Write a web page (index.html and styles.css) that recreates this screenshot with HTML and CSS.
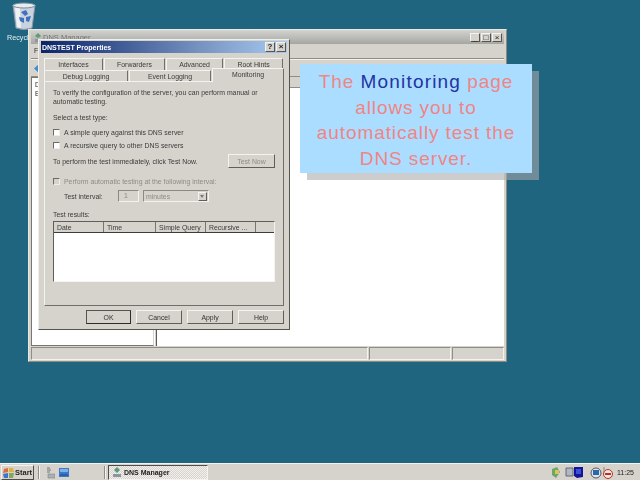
FILE: index.html
```html
<!DOCTYPE html>
<html lang="en">
<head>
<meta charset="utf-8">
<title>DNS Manager</title>
<link rel="stylesheet" href="styles.css">
</head>
<body>
<div class="desktop">
  <div class="desk-icon">
    <svg class="bin" width="24" height="29" viewBox="0 0 24 29"><path d="M1 3 L23 3 L20 26 Q12 29 4 26 Z" fill="#c9d3de" stroke="#8a98a8"/><path d="M3 5 L8 5 L9 26 L5 25 Z" fill="#eef2f5"/><ellipse cx="12" cy="3.500" rx="11" ry="2.500" fill="#e6ecf0" stroke="#7d8b99"/><path d="M9 10 l5 -2 l2 4 l-3 2 Z M7 15 l5 1 l0 5 l-4 -2 Z M14 15 l5 -1 l-2 6 l-3 -1 Z" fill="#4070c0"/></svg>
    <span class="desk-label">Recycle Bin</span>
  </div>

  <section class="window">
    <header class="win-title">
      <svg width="8" height="10" viewBox="0 0 8 10"><path d="M4 0 L7 3 L4 5 L1 3 Z" fill="#5c9c78"/><path d="M1 6 H7 V9 H1 Z" fill="#8b96a0"/></svg>
      <span class="win-name">DNS Manager</span>
      <span class="win-btns"><i class="cap">_</i><i class="cap">□</i><i class="cap">×</i></span>
    </header>
    <div class="menu"><span>File</span></div>
    <div class="toolbar"><svg width="9" height="9" viewBox="0 0 9 9"><path d="M0 4.500 L5 0 V3 H9 V6 H5 V9 Z" fill="#3d8ed0"/></svg></div>
    <div class="panes">
      <div class="tree"><span>D</span><span>E</span></div>
      <div class="split"></div>
      <div class="detail"><div class="detail-head"></div></div>
    </div>
    <footer class="status"><div class="st st-a"></div><div class="st st-b"></div><div class="st st-c"></div></footer>
  </section>

  <section class="dialog">
    <header class="dlg-title"><span>DNSTEST Properties</span><span class="dlg-btns"><i class="cap bold">?</i><i class="cap bold">×</i></span></header>
    <nav class="tabs">
      <div class="tab-row">
        <span class="tab w59">Interfaces</span><span class="tab w61">Forwarders</span><span class="tab w57">Advanced</span><span class="tab w59">Root Hints</span>
      </div>
      <div class="tab-row row2">
        <span class="tab w84">Debug Logging</span><span class="tab w82">Event Logging</span><span class="tab active">Monitoring</span>
      </div>
    </nav>
    <div class="page">
      <p class="para">To verify the configuration of the server, you can perform manual or<br>automatic testing.</p>
      <p class="line gap7">Select a test type:</p>
      <label class="check-row gap5"><i class="check"></i>A simple query against this DNS server</label>
      <label class="check-row gap3"><i class="check"></i>A recursive query to other DNS servers</label>
      <div class="now-row"><span>To perform the test immediately, click Test Now.</span><span class="btn now">Test Now</span></div>
      <label class="check-row off gap8"><i class="check dim"></i>Perform automatic testing at the following interval:</label>
      <div class="interval">
        <span class="int-label">Test interval:</span>
        <span class="field">1</span>
        <span class="select">minutes<i class="arrow"></i></span>
      </div>
      <p class="line gap8">Test results:</p>
      <div class="table">
        <div class="thead"><span class="c50">Date</span><span class="c52">Time</span><span class="c50">Simple Query</span><span class="c50">Recursive ...</span><span class="cfill"></span></div>
      </div>
    </div>
    <div class="actions"><span class="btn def">OK</span><span class="btn">Cancel</span><span class="btn">Apply</span><span class="btn">Help</span></div>
  </section>

  <aside class="callout">The <b class="key">Monitoring</b> page<br>allows you to<br>automatically test the<br>DNS server.</aside>

  <footer class="taskbar">
    <span class="start"><svg width="11" height="12" viewBox="0 0 11 12"><path d="M1 2 L5 1 V5 L0 6 Z" fill="#d9703a"/><path d="M6 1 L10 1 L11 5 H6 Z" fill="#e0b040"/><path d="M0 7 L5 6 V11 L1 11 Z" fill="#3f74c8"/><path d="M6 6 H11 L10 11 L6 11 Z" fill="#7fa860"/></svg>Start</span>
    <i class="sep"></i>
    <span class="quick">
      <svg width="9" height="12" viewBox="0 0 9 12"><path d="M1 1 H4 M1 3 H5 M1 5 H4" stroke="#777" fill="none"/><path d="M2 7 H9 V11 H2 Z" fill="#a9b1b8" stroke="#777" stroke-width=".5"/></svg>
      <svg width="10" height="9" viewBox="0 0 10 9"><path d="M0 0 H10 V9 H0 Z" fill="#3a78c8"/><path d="M1 1 H9 V4 H1 Z" fill="#7fb0e6"/><path d="M1 7 H9" stroke="#1c4a90"/></svg>
    </span>
    <i class="sep sep2"></i>
    <span class="task"><svg width="8" height="11" viewBox="0 0 8 11"><path d="M4 0 L7 3 L4 6 L1 3 Z" fill="#5c9c78"/><path d="M0 7 H8 V10 H0 Z" fill="#8b96a0"/></svg>DNS Manager</span>
    <span class="tray">
      <svg width="32" height="13" viewBox="0 0 32 13"><path d="M0 3 L5 1 L8 6 L4 12 L0 9 Z" fill="#6aa86a"/><path d="M3 4 H7 V8 H3 Z" fill="#e0c060"/><path d="M14 2 H21 V10 H14 Z" fill="#aeb8c4" stroke="#667"/><path d="M22 1 H31 V11 L25 12 L22 10 Z" fill="#14149a"/><path d="M24 3 H29 V8 H24 Z" fill="#3c50d0"/></svg>
      <svg class="tray2" width="24" height="13" viewBox="0 0 24 13"><circle cx="6" cy="7" r="5" fill="#dfe4ea" stroke="#556"/><path d="M3 4 H9 V9 H3 Z" fill="#2a68a8"/><circle cx="18" cy="8" r="4.500" fill="#f0e8e0" stroke="#c03020"/><path d="M15 8 H21" stroke="#c03020" stroke-width="2"/><path d="M14 1 V7" stroke="#888"/></svg>
      <span class="clock">11:25</span>
    </span>
  </footer>
</div>
</body>
</html>
```
FILE: styles.css
```css
* { box-sizing: border-box; }
html, body { margin: 0; height: 100%; overflow: hidden; }
body { font-family: "Liberation Sans", Arial, sans-serif; font-size: 6.900px; color: #2c2c2c; }
i { font-style: normal; }
p { margin: 0; }

.desktop { position: relative; width: 640px; height: 480px; background: #1f6580; overflow: hidden; }

.desk-icon { position: absolute; left: 7px; top: 2px; width: 30px; }
.bin { display: block; margin-left: 5px; }
.desk-label { display: block; color: #e6eef2; font-size: 7.200px; white-space: nowrap; margin-top: 2px; filter: blur(.3px); }

/* DNS Manager window */
.window { position: absolute; left: 28px; top: 29px; width: 479px; height: 333px; display: flex; flex-direction: column; background: #d6d3cc; border: 1px solid #e9e7e2; border-right-color: #8c8a85; border-bottom-color: #8c8a85; padding: 1px 2px 1px 2px; filter: blur(.25px); }
.win-title { height: 13px; flex: none; display: flex; align-items: center; gap: 1px; padding: 0 2px 0 3px; background: linear-gradient(#cfcfcb, #a6a6a2); color: #76766f; font-size: 7.500px; }
.win-name { flex: 1; }
.win-btns { display: flex; gap: 1px; }
.cap { width: 10px; height: 9px; display: flex; align-items: center; justify-content: center; background: #d6d3cc; border: 1px solid; border-color: #f4f3f0 #55544f #55544f #f4f3f0; color: #222; font-size: 8px; line-height: 1; }
.menu { height: 15px; flex: none; padding: 3px 3px; border-bottom: 1px solid #8f8d88; background: #d6d3cc; font-size: 6.900px; }
.toolbar { height: 18px; flex: none; padding: 4px 3px; border-top: 1px solid #f2f1ee; border-bottom: 1px solid #8f8d88; background: #d6d3cc; }
.panes { flex: 1; display: flex; min-height: 0; }
.tree { width: 123px; flex: none; background: #fff; border: 1px solid #77766f; border-right-color: #d6d3cc; padding: 3px 3px; display: flex; flex-direction: column; gap: 2px; }
.split { width: 3px; flex: none; background: #d6d3cc; border-left: 1px solid #fff; border-right: 1px solid #5a5a55; }
.detail { flex: 1; background: #fff; }
.detail-head { height: 11px; background: #d6d3cc; border-bottom: 1px solid #8f8d88; }
.status { height: 14px; flex: none; display: flex; padding-top: 1px; gap: 1px; background: #d6d3cc; }
.st { border: 1px solid; border-color: #8f8d88 #f4f3f0 #f4f3f0 #8f8d88; }
.st-a { width: 337px; }
.st-b { width: 82px; }
.st-c { flex: 1; }

/* Properties dialog */
.dialog { position: absolute; left: 38px; top: 39px; width: 252px; height: 291px; display: flex; flex-direction: column; background: #d6d3cc; border: 1px solid #f0efeb; border-right-color: #55544f; border-bottom-color: #55544f; padding: 1px 2px; filter: blur(.25px); }
.dlg-title { height: 12px; flex: none; display: flex; align-items: center; justify-content: space-between; padding: 0 1px 0 1px; background: linear-gradient(90deg, #0a246a, #7f9cc8 70%, #a6caf0); color: #fff; font-weight: bold; font-size: 7px; }
.dlg-btns { display: flex; gap: 1px; }
.dlg-btns .cap { width: 10px; height: 10px; }
.bold { font-weight: bold; }
.tabs { flex: none; margin: 5px 3px 0 3px; }
.tab-row { display: flex; height: 12px; align-items: stretch; }
.row2 { height: 11px; }
.tab { display: flex; align-items: center; justify-content: center; background: #d6d3cc; border: 1px solid #f4f3f0; border-bottom: 0; border-right: 1px solid #6f6e69; border-radius: 1px 1px 0 0; color: #3a3a3a; font-size: 6.900px; }
.w59 { width: 59px; margin-right: 1px; }
.w61 { width: 61px; margin-right: 1px; }
.w57 { width: 57px; margin-right: 1px; }
.w84 { width: 84px; margin-right: 1px; }
.w82 { width: 82px; margin-right: 1px; }
.tab.active { flex: 1; position: relative; top: -2px; height: 14px; padding: 0 0 2px; z-index: 1; }
.page { flex: none; height: 225px; margin: 0 3px 0 3px; padding: 6px 8px 0 8px; background: #d6d3cc; border: 1px solid #f4f3f0; border-right-color: #6f6e69; border-bottom-color: #6f6e69; color: #3a3a3a; font-size: 6.900px; }
.para { line-height: 9px; }
.line { line-height: 9px; }
.gap7 { margin-top: 7px; }
.gap5 { margin-top: 5px; }
.gap3 { margin-top: 3px; }
.gap8 { margin-top: 8px; }
.check-row { display: flex; align-items: center; gap: 4px; height: 10px; }
.check { width: 7px; height: 7px; background: #fff; border: 1px solid; border-color: #6c6b66 #eeede9 #eeede9 #6c6b66; }
.check.dim { background: #d6d3cc; }
.off { color: #8d8b85; }
.now-row { display: flex; justify-content: space-between; align-items: center; height: 14px; margin-top: 4px; }
.btn { display: flex; align-items: center; justify-content: center; background: #d6d3cc; border: 1px solid; border-color: #f4f3f0 #5f5e59 #5f5e59 #f4f3f0; color: #333; font-size: 6.900px; }
.now { width: 47px; height: 14px; color: #8d8b85; }
.interval { display: flex; align-items: center; height: 12px; margin-top: 4px; padding-left: 11px; color: #3a3a3a; }
.int-label { width: 54px; }
.field { width: 21px; height: 12px; margin-right: 4px; padding-left: 5px; line-height: 10px; color: #8d8b85; border: 1px solid; border-color: #8a8984 #f4f3f0 #f4f3f0 #8a8984; }
.select { width: 66px; height: 12px; display: flex; align-items: center; justify-content: space-between; padding: 0 1px 0 2px; color: #8d8b85; border: 1px solid; border-color: #8a8984 #f4f3f0 #f4f3f0 #8a8984; }
.arrow { width: 9px; height: 9px; position: relative; background: #d6d3cc; border: 1px solid; border-color: #f4f3f0 #5f5e59 #5f5e59 #f4f3f0; }
.arrow::after { content: ""; position: absolute; left: 1px; top: 2px; border: 2.500px solid transparent; border-top: 3px solid #77766f; border-bottom: 0; }
.table { height: 61px; margin-top: 2px; background: #fff; border: 1px solid; border-color: #5f5e59 #f4f3f0 #f4f3f0 #5f5e59; }
.thead { display: flex; height: 11px; background: #d6d3cc; border-bottom: 1px solid #3c3c38; }
.thead span { padding: 2px 0 0 3px; border-right: 1px solid #77766f; white-space: nowrap; font-size: 6.900px; line-height: 8px; overflow: hidden; }
.c50 { width: 50px; }
.c52 { width: 52px; }
.thead .cfill { flex: 1; border-right: 0; }
.actions { display: flex; justify-content: flex-end; gap: 5px; margin-top: 4px; padding-right: 3px; }
.actions .btn { width: 46px; height: 14px; }
.actions .def { width: 45px; border-color: #55544f #2c2c2a #2c2c2a #55544f; }

/* Callout */
.callout { position: absolute; left: 300px; top: 64px; width: 232px; height: 109px; padding-top: 5px; background: #aaddff; box-shadow: 7px 7px 0 rgba(169, 169, 169, .58); text-align: center; color: #f08585; font-size: 19px; line-height: 25.500px; letter-spacing: .9px; }
.key { font-weight: normal; color: #2433a3; letter-spacing: 1.200px; }

/* Taskbar */
.taskbar { position: absolute; left: 0; right: 0; bottom: 0; height: 17px; display: flex; align-items: center; padding: 1px 3px 0 1px; background: #d6d3cc; border-top: 1px solid #f4f3f0; filter: blur(.25px); }
.start { width: 33px; height: 15px; display: flex; align-items: center; gap: 1px; padding-left: 1px; font-weight: bold; font-size: 7.500px; background: #d6d3cc; border: 1px solid; border-color: #f4f3f0 #4f4e4a #4f4e4a #f4f3f0; color: #222; }
.sep { width: 2px; height: 13px; margin-left: 4px; border-left: 1px solid #8f8d88; border-right: 1px solid #f4f3f0; }
.quick { display: flex; align-items: center; gap: 4px; margin-left: 6px; }
.sep2 { margin-left: 35px; }
.task { width: 100px; height: 15px; margin-left: 2px; display: flex; align-items: center; gap: 3px; padding-left: 4px; font-weight: bold; font-size: 7px; color: #222; background: repeating-conic-gradient(#f2f0ec 0 25%, #d6d3cc 0 50%) 0 0 / 2px 2px; border: 1px solid; border-color: #4f4e4a #f4f3f0 #f4f3f0 #4f4e4a; }
.tray { margin-left: auto; display: flex; align-items: center; }
.tray2 { margin-left: 6px; }
.clock { margin-left: 3px; font-size: 7px; color: #222; width: 20px; }
```
